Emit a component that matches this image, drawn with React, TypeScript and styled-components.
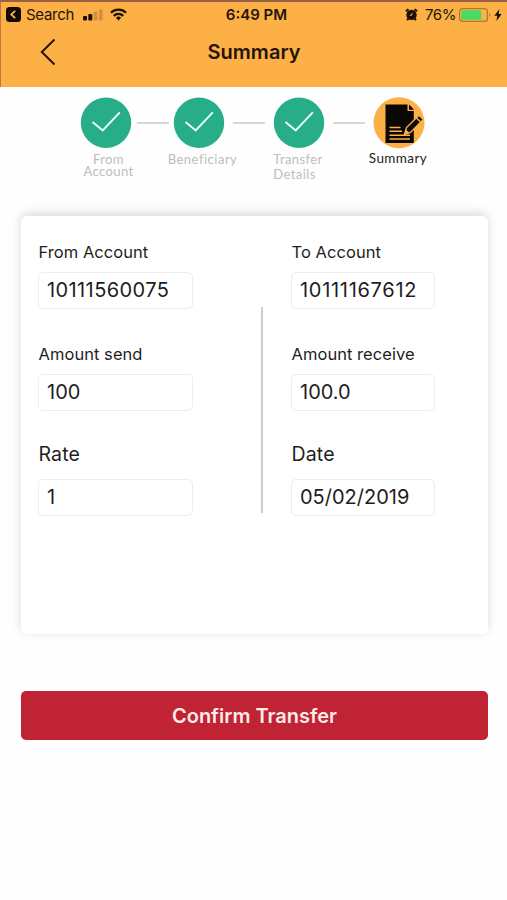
import React from 'react';
import styled, { createGlobalStyle } from 'styled-components';

const GlobalStyle = createGlobalStyle`
  * { box-sizing: border-box; }
  body { margin: 0; background: #fefefe; }
`;

const Screen = styled.div`
  width: 507px;
  height: 900px;
  display: flex;
  flex-direction: column;
  overflow: hidden;
  background: #fefefe;
  color: #1e1e1e;
  font-family: Inter, "Liberation Sans", sans-serif;
`;

const Header = styled.header`
  height: 87px;
  flex: none;
  background: #fcb045;
  border-top: 2px solid #9a6045;
  border-left: 1px solid #b87b45;
  color: #24150a;
`;

const StatusBar = styled.div`
  display: grid;
  grid-template-columns: 1fr auto 1fr;
  align-items: center;
  height: 25px;
  padding: 0 5px;
`;

const StatusGroup = styled.div<{ $end?: boolean }>`
  display: flex;
  align-items: center;
  gap: ${(p) => (p.$end ? 7 : 5)}px;
  justify-content: ${(p) => (p.$end ? 'flex-end' : 'flex-start')};
`;

const StatusText = styled.span<{ $bold?: boolean; $spacing?: number }>`
  font-size: 15px;
  line-height: 20px;
  padding-left: ${(p) => (p.$bold ? 5 : 0)}px;
  font-weight: ${(p) => (p.$bold ? 600 : 400)};
  letter-spacing: ${(p) => p.$spacing ?? 0}px;
  white-space: nowrap;
`;

const Icon = styled.svg<{ $left?: number }>`
  display: block;
  flex: none;
  margin-left: ${(p) => p.$left ?? 0}px;
`;

const NavBar = styled.div`
  display: grid;
  grid-template-columns: 60px 1fr 60px;
  align-items: center;
  height: 50px;
`;

const BackButton = styled.button`
  display: flex;
  justify-content: flex-end;
  padding: 0 5px 0 0;
  border: 0;
  background: none;
  color: inherit;
`;

const Title = styled.h1`
  margin: 0;
  text-align: center;
  font-size: 20px;
  line-height: 26px;
  font-weight: 600;
  letter-spacing: 0.05px;
`;

const Stepper = styled.nav`
  display: grid;
  grid-template-columns: 50px 43px 50px 50px 50px 49px 51px;
  justify-items: center;
  height: 129px;
  flex: none;
  padding: 10px 0 0 81px;
`;

const Step = styled.div`
  width: 110px;
  display: flex;
  flex-direction: column;
  align-items: center;
  justify-self: center;
`;

const StepLabel = styled.div<{
  $active?: boolean;
  $line?: number;
  $shift?: number;
  $left?: boolean;
  $spacing?: number;
}>`
  margin-top: ${(p) => (p.$active ? 2 : p.$line === 12 ? 4 : 3)}px;
  padding-left: ${(p) => Math.max(p.$shift ?? 0, 0)}px;
  padding-right: ${(p) => Math.max(-(p.$shift ?? 0), 0)}px;
  font-family: Lato, sans-serif;
  font-size: ${(p) => (p.$active ? 13.5 : 13)}px;
  line-height: ${(p) => p.$line ?? 14}px;
  letter-spacing: ${(p) => p.$spacing ?? 0.4}px;
  text-align: ${(p) => (p.$left ? 'left' : 'center')};
  white-space: pre-line;
  color: ${(p) => (p.$active ? '#222' : '#bdbdbd')};
`;

const Connector = styled.div`
  width: 32px;
  height: 2px;
  margin-top: 25px;
  background: #d8d6d6;
`;

const Card = styled.main`
  display: grid;
  grid-template-columns: 155px 1fr 144px;
  height: 418px;
  flex: none;
  margin: 0 19px 0 21px;
  padding: 25px 53px 0 17px;
  border-radius: 6px;
  background: #fff;
  box-shadow: 0 -3px 10px rgba(0, 0, 0, 0.1), 0 -2px 14px rgba(0, 0, 0, 0.05);
`;

const Column = styled.div`
  display: flex;
  flex-direction: column;
`;

const Divider = styled.div`
  justify-self: center;
  width: 2px;
  height: 206px;
  margin: 66px 0 0 39px;
  background: #cdcdcd;
`;

const Field = styled.label`
  display: flex;
  flex-direction: column;
  height: 102px;
`;

const FieldLabel = styled.span<{ $large?: boolean }>`
  height: 31px;
  margin-top: ${(p) => (p.$large ? -2 : 0)}px;
  margin-bottom: ${(p) => (p.$large ? 5 : 0)}px;
  padding-left: 0.5px;
  flex: none;
  font-size: ${(p) => (p.$large ? 19.5 : 16.5)}px;
  line-height: 22px;
  letter-spacing: ${(p) => (p.$large ? 0.15 : 0.05)}px;
  white-space: nowrap;
`;

const Value = styled.span<{ $spacing?: number }>`
  height: 37px;
  flex: none;
  padding: 0 8px;
  border: 1px solid #ededed;
  border-radius: 5px;
  font-size: 20px;
  line-height: 35px;
  letter-spacing: ${(p) => p.$spacing ?? 0}px;
  white-space: nowrap;
`;

const Confirm = styled.button`
  flex: none;
  height: 49px;
  margin: 57px 19px 0 21px;
  padding: 0;
  border: 0;
  border-radius: 5px;
  background: #c02333;
  color: #fdeaea;
  font-family: inherit;
  font-size: 20px;
  font-weight: 600;
  line-height: 26px;
`;

const BackAppIcon = () => (
  <Icon width="15" height="15" viewBox="0 0 15 15">
    <rect width="15" height="15" rx="3.5" fill="#120b04" />
    <path d="M9.2 3.8 5.2 7.5l4 3.7" fill="none" stroke="#fcb045" strokeWidth="1.8" />
  </Icon>
);

const SignalIcon = () => (
  <Icon $left={4} width="20" height="12" viewBox="0 0 20 12">
    <rect x="0" y="7" width="4" height="4.5" rx="1" fill="#1c1006" />
    <rect x="5.3" y="5" width="4" height="6.5" rx="1" fill="#1c1006" />
    <rect x="10.8" y="2.5" width="3.6" height="9" rx="1" fill="#cf9140" />
    <rect x="16" y="0.3" width="3.6" height="11.2" rx="1" fill="#cf9140" />
  </Icon>
);

const WifiIcon = () => (
  <Icon $left={2} width="17" height="13" viewBox="0 0 18 13">
    <g fill="none" stroke="#1c1006" strokeWidth="2.4">
      <path d="M1 4.6a11.4 11.4 0 0 1 16 0" />
      <path d="M4 7.9a7.2 7.2 0 0 1 10 0" />
    </g>
    <path d="M6.2 10a4 4 0 0 1 5.6 0L9 12.8z" fill="#1c1006" />
  </Icon>
);

const AlarmIcon = () => (
  <Icon width="13" height="13" viewBox="0 0 13 13">
    <circle cx="6.5" cy="6.9" r="5.2" fill="#1c1006" />
    <path d="M.9 3.3 3.5 1.2M12.1 3.3 9.5 1.2M3.2 10.5 2.2 12.3M9.8 10.5l1 1.8" stroke="#1c1006" strokeWidth="2" />
    <path d="M7.3 4.8 6.7 7.3H4.8" fill="none" stroke="#fcb045" strokeWidth="1" />
  </Icon>
);

const BatteryIcon = () => (
  <Icon $left={-4} width="32" height="14" viewBox="0 0 32 14">
    <rect x=".6" y=".6" width="27.8" height="12.8" rx="3" fill="none" stroke="#ac7a2f" strokeWidth="1.2" />
    <rect x="2.3" y="2.3" width="20" height="9.4" rx="1" fill="#4cd964" />
    <path d="M30 5v4c1.5-.7 1.5-3.3 0-4z" fill="#ac7a2f" />
  </Icon>
);

const BoltIcon = () => (
  <Icon $left={-4} width="8" height="12" viewBox="0 0 8 12">
    <path d="M5.5 0 .3 6.8h3L2.4 12 7.7 5H4.6z" fill="#1c1006" />
  </Icon>
);

const DoneIcon = () => (
  <Icon width="52" height="52" viewBox="0 0 52 52">
    <circle cx="26" cy="25.7" r="25.2" fill="#27ad88" />
    <path d="m12.5 25 10.2 8.5L39.8 15.4" fill="none" stroke="#e9fff8" strokeWidth="2" />
  </Icon>
);

const SummaryIcon = () => (
  <Icon width="52" height="52" viewBox="0 0 52 52">
    <circle cx="26" cy="25.7" r="25.5" fill="#fcb045" />
    <path d="M12.5 7.5H34.5V14H40.8V46H12.5z" fill="#0b0704" />
    <path d="M36 7.5 41.2 12.7H36z" fill="#0b0704" />
    <path d="M16.5 30.4h11M16.5 34.3h12.5M16.5 38.2h20.5M16.5 42h20.5" stroke="#fcb045" strokeWidth="1.5" />
    <path d="m31.5 37.5 2-7L46 18.2l4.3 4.3L37.5 35.5z" fill="#0b0704" stroke="#fcb045" strokeWidth="1.4" />
    <path d="m43.3 20.8 4.2 4.2" stroke="#fcb045" strokeWidth="1.5" />
    <path d="m31 38 1.8-5.5 3.7 3.5z" fill="#fcb045" />
  </Icon>
);

const steps = [
  { label: 'From\nAccount', line: 12, shift: 5 },
  { label: 'Beneficiary', line: 14, shift: 7, spacing: 0.5 },
  { label: 'Transfer\nDetails', line: 15, shift: -2, left: true },
  { label: 'Summary', line: 14, shift: -1, active: true },
];

const columns = [
  [
    { label: 'From Account', value: '10111560075', spacing: 0.4 },
    { label: 'Amount send', value: '100' },
    { label: 'Rate', value: '1', large: true },
  ],
  [
    { label: 'To Account', value: '10111167612', spacing: 0.7 },
    { label: 'Amount receive', value: '100.0' },
    { label: 'Date', value: '05/02/2019', large: true },
  ],
];

const Fields = ({ items }: { items: (typeof columns)[number] }) => (
  <Column>
    {items.map((f) => (
      <Field key={f.label}>
        <FieldLabel $large={f.large}>{f.label}</FieldLabel>
        <Value $spacing={f.spacing}>{f.value}</Value>
      </Field>
    ))}
  </Column>
);

export default function App() {
  return (
    <Screen>
      <GlobalStyle />
      <Header>
        <StatusBar>
          <StatusGroup>
            <BackAppIcon />
            <StatusText $spacing={-0.3}>Search</StatusText>
            <SignalIcon />
            <WifiIcon />
          </StatusGroup>
          <StatusText $bold>6:49 PM</StatusText>
          <StatusGroup $end>
            <AlarmIcon />
            <StatusText $spacing={-0.4}>76%</StatusText>
            <BatteryIcon />
            <BoltIcon />
          </StatusGroup>
        </StatusBar>
        <NavBar>
          <BackButton aria-label="Back">
            <Icon width="16" height="28" viewBox="0 0 16 28">
              <path d="M14.5 1.5 1.8 14l12.7 12.5" fill="none" stroke="currentColor" strokeWidth="2" />
            </Icon>
          </BackButton>
          <Title>Summary</Title>
        </NavBar>
      </Header>
      <Stepper>
        {steps.map((s, i) => (
          <React.Fragment key={s.label}>
            {i > 0 && <Connector />}
            <Step>
              {s.active ? <SummaryIcon /> : <DoneIcon />}
              <StepLabel
                $active={s.active}
                $line={s.line}
                $shift={s.shift}
                $left={s.left}
                $spacing={s.spacing}
              >
                {s.label}
              </StepLabel>
            </Step>
          </React.Fragment>
        ))}
      </Stepper>
      <Card>
        <Fields items={columns[0]} />
        <Divider />
        <Fields items={columns[1]} />
      </Card>
      <Confirm>Confirm Transfer</Confirm>
    </Screen>
  );
}
